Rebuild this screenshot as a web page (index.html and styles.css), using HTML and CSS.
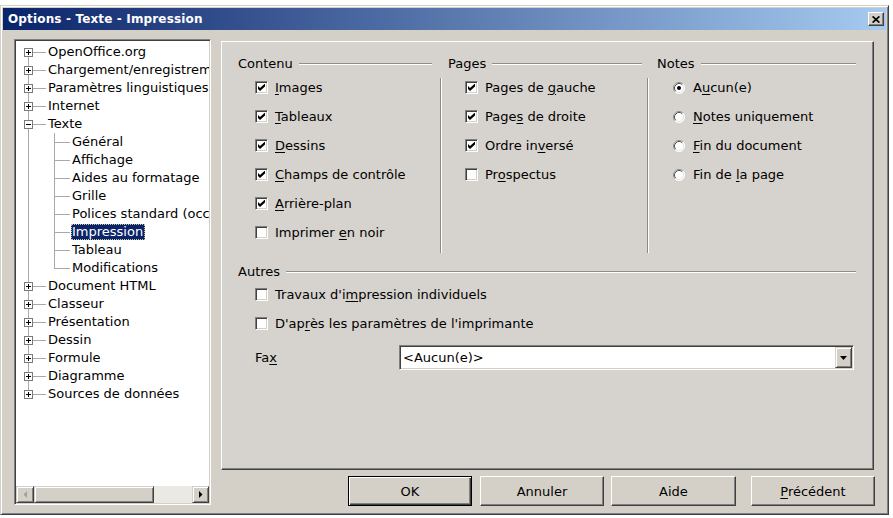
FILE: index.html
```html
<!DOCTYPE html>
<html lang="fr">
<head>
<meta charset="utf-8">
<title>Options - Texte - Impression</title>
<link rel="stylesheet" href="styles.css">
</head>
<body>
<div class="dialog">
  <div class="titlebar">
    <span class="title">Options - Texte - Impression</span>
    <span class="close"><svg width="8" height="7" viewBox="0 0 8 7"><path d="M0.6 0.4 L7.4 6.6 M7.4 0.4 L0.6 6.6" stroke="#000" stroke-width="1.7" fill="none"/></svg></span>
  </div>
  <div class="body">
    <div class="tree">
      <div class="tree-list">
        <div class="node l0"><span class="g first"><span class="exp plus"></span></span><span class="lbl">OpenOffice.org</span></div>
        <div class="node l0"><span class="g"><span class="exp plus"></span></span><span class="lbl">Chargement/enregistrement</span></div>
        <div class="node l0"><span class="g"><span class="exp plus"></span></span><span class="lbl">Paramètres linguistiques</span></div>
        <div class="node l0"><span class="g"><span class="exp plus"></span></span><span class="lbl">Internet</span></div>
        <div class="node l0"><span class="g"><span class="exp minus"></span></span><span class="lbl">Texte</span></div>
        <div class="node l1"><span class="g"></span><span class="g1"></span><span class="lbl">Général</span></div>
        <div class="node l1"><span class="g"></span><span class="g1"></span><span class="lbl">Affichage</span></div>
        <div class="node l1"><span class="g"></span><span class="g1"></span><span class="lbl">Aides au formatage</span></div>
        <div class="node l1"><span class="g"></span><span class="g1"></span><span class="lbl">Grille</span></div>
        <div class="node l1"><span class="g"></span><span class="g1"></span><span class="lbl">Polices standard (occidental)</span></div>
        <div class="node l1"><span class="g"></span><span class="g1"></span><span class="lbl"><span class="sel">Impression</span></span></div>
        <div class="node l1"><span class="g"></span><span class="g1"></span><span class="lbl">Tableau</span></div>
        <div class="node l1"><span class="g"></span><span class="g1 last"></span><span class="lbl">Modifications</span></div>
        <div class="node l0"><span class="g"><span class="exp plus"></span></span><span class="lbl">Document HTML</span></div>
        <div class="node l0"><span class="g"><span class="exp plus"></span></span><span class="lbl">Classeur</span></div>
        <div class="node l0"><span class="g"><span class="exp plus"></span></span><span class="lbl">Présentation</span></div>
        <div class="node l0"><span class="g"><span class="exp plus"></span></span><span class="lbl">Dessin</span></div>
        <div class="node l0"><span class="g"><span class="exp plus"></span></span><span class="lbl">Formule</span></div>
        <div class="node l0"><span class="g"><span class="exp plus"></span></span><span class="lbl">Diagramme</span></div>
        <div class="node l0"><span class="g last"><span class="exp plus"></span></span><span class="lbl">Sources de données</span></div>
      </div>
      <div class="hscroll">
        <span class="raised sbtn left"><svg width="4" height="7" viewBox="0 0 4 7"><polygon points="4,0 4,7 0.5,3.5" fill="#a0a0a0"/></svg></span>
        <span class="raised thumb"></span>
        <span class="track"></span>
        <span class="raised sbtn right"><svg width="4" height="7" viewBox="0 0 4 7"><polygon points="0,0 0,7 3.5,3.5" fill="#000"/></svg></span>
      </div>
    </div>

    <div class="main">
      <div class="panel">
        <div class="toprow">
          <div class="group g-contenu">
            <div class="ghead"><span>Contenu</span><span class="gline"></span></div>
            <div class="items">
              <div class="row"><span class="cb"><svg width="7" height="7" viewBox="0 0 7 7"><path d="M0 2 L2 4 L7 -0.5 L7 2.5 L2 7 L0 5 Z" fill="#000"/></svg></span><span><u>I</u>mages</span></div>
              <div class="row"><span class="cb"><svg width="7" height="7" viewBox="0 0 7 7"><path d="M0 2 L2 4 L7 -0.5 L7 2.5 L2 7 L0 5 Z" fill="#000"/></svg></span><span><u>T</u>ableaux</span></div>
              <div class="row"><span class="cb"><svg width="7" height="7" viewBox="0 0 7 7"><path d="M0 2 L2 4 L7 -0.5 L7 2.5 L2 7 L0 5 Z" fill="#000"/></svg></span><span><u>D</u>essins</span></div>
              <div class="row"><span class="cb"><svg width="7" height="7" viewBox="0 0 7 7"><path d="M0 2 L2 4 L7 -0.5 L7 2.5 L2 7 L0 5 Z" fill="#000"/></svg></span><span><u>C</u>hamps de contrôle</span></div>
              <div class="row"><span class="cb"><svg width="7" height="7" viewBox="0 0 7 7"><path d="M0 2 L2 4 L7 -0.5 L7 2.5 L2 7 L0 5 Z" fill="#000"/></svg></span><span><u>A</u>rrière-plan</span></div>
              <div class="row"><span class="cb"></span><span>Imprimer <u>e</u>n noir</span></div>
            </div>
          </div>
          <span class="vsep s1"></span>
          <div class="group g-pages">
            <div class="ghead"><span>Pages</span><span class="gline"></span></div>
            <div class="items">
              <div class="row"><span class="cb"><svg width="7" height="7" viewBox="0 0 7 7"><path d="M0 2 L2 4 L7 -0.5 L7 2.5 L2 7 L0 5 Z" fill="#000"/></svg></span><span>Pages de <u>g</u>auche</span></div>
              <div class="row"><span class="cb"><svg width="7" height="7" viewBox="0 0 7 7"><path d="M0 2 L2 4 L7 -0.5 L7 2.5 L2 7 L0 5 Z" fill="#000"/></svg></span><span>Page<u>s</u> de droite</span></div>
              <div class="row"><span class="cb"><svg width="7" height="7" viewBox="0 0 7 7"><path d="M0 2 L2 4 L7 -0.5 L7 2.5 L2 7 L0 5 Z" fill="#000"/></svg></span><span>Ordre in<u>v</u>ersé</span></div>
              <div class="row"><span class="cb"></span><span>Pr<u>o</u>spectus</span></div>
            </div>
          </div>
          <span class="vsep s2"></span>
          <div class="group g-notes">
            <div class="ghead"><span>Notes</span><span class="gline"></span></div>
            <div class="items">
              <div class="row"><span class="rb"><svg width="12" height="12" viewBox="0 0 12 12"><circle cx="6" cy="6" r="5.5" fill="#fff"/><path d="M2.11 9.89 A5.5 5.5 0 0 1 9.89 2.11" stroke="#8c8c8c" fill="none"/><path d="M2.82 9.18 A4.5 4.5 0 0 1 9.18 2.82" stroke="#505050" fill="none"/><path d="M9.89 2.11 A5.5 5.5 0 0 1 2.11 9.89" stroke="#ffffff" fill="none"/><path d="M9.18 2.82 A4.5 4.5 0 0 1 2.82 9.18" stroke="#e4e2de" fill="none"/><circle cx="6" cy="6" r="2" fill="#000"/></svg></span><span>A<u>u</u>cun(e)</span></div>
              <div class="row"><span class="rb"><svg width="12" height="12" viewBox="0 0 12 12"><circle cx="6" cy="6" r="5.5" fill="#fff"/><path d="M2.11 9.89 A5.5 5.5 0 0 1 9.89 2.11" stroke="#8c8c8c" fill="none"/><path d="M2.82 9.18 A4.5 4.5 0 0 1 9.18 2.82" stroke="#505050" fill="none"/><path d="M9.89 2.11 A5.5 5.5 0 0 1 2.11 9.89" stroke="#ffffff" fill="none"/><path d="M9.18 2.82 A4.5 4.5 0 0 1 2.82 9.18" stroke="#e4e2de" fill="none"/></svg></span><span><u>N</u>otes uniquement</span></div>
              <div class="row"><span class="rb"><svg width="12" height="12" viewBox="0 0 12 12"><circle cx="6" cy="6" r="5.5" fill="#fff"/><path d="M2.11 9.89 A5.5 5.5 0 0 1 9.89 2.11" stroke="#8c8c8c" fill="none"/><path d="M2.82 9.18 A4.5 4.5 0 0 1 9.18 2.82" stroke="#505050" fill="none"/><path d="M9.89 2.11 A5.5 5.5 0 0 1 2.11 9.89" stroke="#ffffff" fill="none"/><path d="M9.18 2.82 A4.5 4.5 0 0 1 2.82 9.18" stroke="#e4e2de" fill="none"/></svg></span><span><u>F</u>in du document</span></div>
              <div class="row"><span class="rb"><svg width="12" height="12" viewBox="0 0 12 12"><circle cx="6" cy="6" r="5.5" fill="#fff"/><path d="M2.11 9.89 A5.5 5.5 0 0 1 9.89 2.11" stroke="#8c8c8c" fill="none"/><path d="M2.82 9.18 A4.5 4.5 0 0 1 9.18 2.82" stroke="#505050" fill="none"/><path d="M9.89 2.11 A5.5 5.5 0 0 1 2.11 9.89" stroke="#ffffff" fill="none"/><path d="M9.18 2.82 A4.5 4.5 0 0 1 2.82 9.18" stroke="#e4e2de" fill="none"/></svg></span><span>Fin de <u>l</u>a page</span></div>
            </div>
          </div>
        </div>

        <div class="group g-autres">
          <div class="ghead"><span>Autres</span><span class="gline"></span></div>
          <div class="items">
            <div class="row"><span class="cb"></span><span>Travaux d'i<u>m</u>pression individuels</span></div>
            <div class="row"><span class="cb"></span><span>D'ap<u>r</u>ès les paramètres de l'imprimante</span></div>
          </div>
          <div class="faxrow">
            <span class="faxlabel">Fa<u>x</u></span>
            <div class="combo">
              <span class="combo-text">&lt;Aucun(e)&gt;</span>
              <span class="raised dd"><svg width="7" height="4" viewBox="0 0 7 4"><polygon points="0,0 7,0 3.5,4" fill="#000"/></svg></span>
            </div>
          </div>
        </div>
      </div>
      <div class="buttons">
        <span class="btn default b-ok">OK</span>
        <span class="btn b-cancel">Annuler</span>
        <span class="btn b-help">Aide</span>
        <span class="btn b-prev"><span><u>P</u>récédent</span></span>
      </div>
    </div>
  </div>
</div>
</body>
</html>
```

FILE: styles.css
```css
* { box-sizing: border-box; }
html, body { margin: 0; padding: 0; background: #ffffff; }
body {
  font-family: "DejaVu Sans", "Noto Sans", sans-serif;
  font-size: 13px;
  color: #000;
}
u { text-decoration: underline; text-underline-offset: 2px; }

.dialog {
  margin-top: 5px;
  width: 889px;
  height: 510px;
  background: #d4d0c8;
  border: 1px solid;
  border-color: #d4d0c8 #404040 #404040 #d4d0c8;
  box-shadow: inset 1px 1px #ffffff, inset -1px -1px #808080;
  padding: 2px;
  display: flex;
  flex-direction: column;
}

.titlebar {
  flex: none;
  height: 22px;
  display: flex;
  align-items: center;
  justify-content: space-between;
  background: linear-gradient(to right, #0a246a, #a6caf0);
  padding: 0 2px 0 5px;
}
.title {
  color: #fff;
  font-weight: bold;
  font-size: 12px;
  letter-spacing: 0.15px;
}
.close {
  width: 16px;
  height: 14px;
  background: #d4d0c8;
  border: 1px solid;
  border-color: #ffffff #404040 #404040 #ffffff;
  box-shadow: inset -1px -1px #808080;
  display: flex;
  align-items: center;
  justify-content: center;
}

.body {
  flex: 1;
  display: flex;
  padding: 9px 0 7px 11px;
}

/* tree */
.tree {
  width: 197px;
  height: 466px;
  flex: none;
  background: #fff;
  border: 1px solid;
  border-color: #808080 #ffffff #ffffff #808080;
  box-shadow: inset 1px 1px #404040, inset -1px -1px #d4d0c8;
  padding: 1px;
  display: flex;
  flex-direction: column;
}
.tree-list {
  flex: 1;
  overflow: hidden;
  padding-top: 2px;
}
.node {
  height: 18px;
  display: flex;
  align-items: center;
  white-space: nowrap;
}
.g {
  width: 32px;
  height: 18px;
  flex: none;
  display: flex;
  align-items: center;
  padding-left: 8px;
}
.l0 .g {
  background:
    linear-gradient(#a9a9a9, #a9a9a9) 17px 9px / 13px 1px no-repeat,
    linear-gradient(#a9a9a9, #a9a9a9) 12px 0 / 1px 18px no-repeat;
}
.l0 .g.first {
  background:
    linear-gradient(#a9a9a9, #a9a9a9) 17px 9px / 13px 1px no-repeat,
    linear-gradient(#a9a9a9, #a9a9a9) 12px 9px / 1px 9px no-repeat;
}
.l0 .g.last {
  background:
    linear-gradient(#a9a9a9, #a9a9a9) 17px 9px / 13px 1px no-repeat,
    linear-gradient(#a9a9a9, #a9a9a9) 12px 0 / 1px 9px no-repeat;
}
.l1 .g {
  background: linear-gradient(#a9a9a9, #a9a9a9) 12px 0 / 1px 18px no-repeat;
}
.g1 {
  width: 24px;
  height: 18px;
  flex: none;
  background:
    linear-gradient(#a9a9a9, #a9a9a9) 6px 9px / 16px 1px no-repeat,
    linear-gradient(#a9a9a9, #a9a9a9) 6px 0 / 1px 18px no-repeat;
}
.g1.last {
  background:
    linear-gradient(#a9a9a9, #a9a9a9) 6px 9px / 16px 1px no-repeat,
    linear-gradient(#a9a9a9, #a9a9a9) 6px 0 / 1px 10px no-repeat;
}
.exp {
  width: 9px;
  height: 9px;
  border: 1px solid #7a7a7a;
  background-color: #fff;
}
.exp.minus {
  background: #fff linear-gradient(#000, #000) center / 5px 1px no-repeat;
}
.exp.plus {
  background:
    linear-gradient(#000, #000) center / 5px 1px no-repeat,
    linear-gradient(#000, #000) center / 1px 5px no-repeat,
    #fff;
}
.lbl { line-height: 18px; }
.sel {
  display: inline-block;
  background: #0a246a;
  color: #fff;
  line-height: 16px;
  padding: 0 2px 0 1px;
  margin-left: -1px;
  outline: 1px dotted #cfc79a;
  outline-offset: -1px;
}

.raised {
  background: #d4d0c8;
  border: 1px solid;
  border-color: #d4d0c8 #404040 #404040 #d4d0c8;
  box-shadow: inset 1px 1px #ffffff, inset -1px -1px #808080;
  display: flex;
  align-items: center;
  justify-content: center;
}
.hscroll {
  flex: none;
  height: 17px;
  display: flex;
}
.sbtn.left { width: 18px; }
.sbtn.right { width: 17px; }
.thumb { width: 120px; }
.track {
  flex: 1;
  background: #ebe9e4;
}

/* main area */
.main {
  width: 654px;
  margin-left: 10px;
  margin-top: 2px;
  display: flex;
  flex-direction: column;
}
.panel {
  height: 429px;
  margin-right: 1px;
  background: #d6d3ce;
  border: 1px solid;
  border-color: #ffffff #404040 #404040 #ffffff;
  box-shadow: inset -1px -1px #808080;
  padding: 13px 0 0 16px;
}
.toprow {
  display: flex;
  align-items: flex-start;
}
.group { flex: none; }
.g-contenu { width: 194px; }
.g-pages { width: 194px; margin-left: 6px; }
.g-notes { width: 199px; margin-left: 8px; }
.g-autres { width: 618px; margin-top: 10px; }
.vsep {
  flex: none;
  width: 2px;
  height: 175px;
  margin-top: 23px;
  border-left: 1px solid #8a8a8a;
  border-right: 1px solid #ffffff;
}
.vsep.s1 { margin-left: 8px; }
.vsep.s2 { margin-left: 5px; }

.ghead {
  height: 16px;
  display: flex;
  align-items: center;
  white-space: nowrap;
}
.gline {
  flex: 1;
  height: 2px;
  margin-left: 6px;
  margin-top: 1px;
  border-top: 1px solid #8e8e8e;
  border-bottom: 1px solid #ffffff;
}
.items { margin-top: 2px; padding-left: 17px; }
.g-notes .items { padding-left: 16px; }
.g-autres .items { margin-top: 1px; }
.row {
  height: 29px;
  display: flex;
  align-items: center;
  white-space: nowrap;
}
.cb {
  width: 13px;
  height: 13px;
  flex: none;
  margin-right: 7px;
  background: #fff;
  border: 1px solid;
  border-color: #808080 #ffffff #ffffff #808080;
  box-shadow: inset 1px 1px #404040, inset -1px -1px #d4d0c8;
  display: flex;
  align-items: center;
  justify-content: center;
}
.cb svg { display: block; }
.rb {
  width: 12px;
  height: 12px;
  flex: none;
  margin-right: 8px;
  display: flex;
}
.rb svg { display: block; }

.faxrow {
  margin-top: 7px;
  height: 25px;
  display: flex;
  align-items: center;
  padding-left: 17px;
}
.faxlabel { width: 144px; flex: none; }
.combo {
  width: 455px;
  height: 25px;
  background: #fff;
  border: 1px solid;
  border-color: #808080 #ffffff #ffffff #808080;
  box-shadow: inset 1px 1px #404040, inset -1px -1px #d4d0c8;
  padding: 1px;
  display: flex;
  align-items: center;
}
.combo-text { flex: 1; padding-left: 2px; white-space: nowrap; }
.dd { width: 17px; height: 21px; flex: none; }

/* buttons */
.buttons {
  margin-top: 6px;
  height: 30px;
  display: flex;
  justify-content: flex-end;
}
.btn {
  height: 30px;
  width: 124px;
  background: #d4d0c8;
  border: 1px solid;
  border-color: #ffffff #404040 #404040 #ffffff;
  box-shadow: inset -1px -1px #808080;
  display: flex;
  align-items: center;
  justify-content: center;
}
.btn.default {
  border-color: #000;
  box-shadow: inset 1px 1px #ffffff, inset -1px -1px #404040, inset -2px -2px #808080;
}
.b-cancel { margin-left: 8px; }
.b-help { margin-left: 7px; width: 125px; }
.b-prev { margin-left: 15px; }
```
